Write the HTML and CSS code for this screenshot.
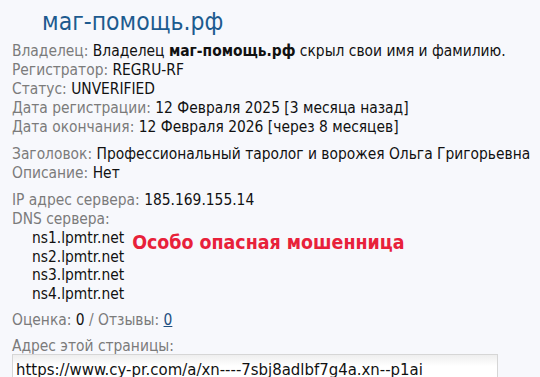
FILE: index.html
```html
<!DOCTYPE html>
<html lang="ru">
<head>
  <meta charset="UTF-8" />
  <meta name="viewport" content="width=device-width, initial-scale=1" />
  <title>маг-помощь.рф - whois</title>
  <link rel="stylesheet" href="styles.css">
</head>
<body>
  <h1 class="domain">маг-помощь.рф</h1>

  <div class="group">
    <p><span class="label">Владелец:</span> Владелец <b>маг-помощь.рф</b> скрыл свои имя и фамилию.</p>
    <p><span class="label">Регистратор:</span> REGRU-RF</p>
    <p><span class="label">Статус:</span> UNVERIFIED</p>
    <p><span class="label">Дата регистрации:</span> 12 Февраля 2025 [3 месяца назад]</p>
    <p><span class="label">Дата окончания:</span> 12 Февраля 2026 [через 8 месяцев]</p>
  </div>

  <div class="group">
    <p><span class="label">Заголовок:</span> Профессиональный таролог и ворожея Ольга Григорьевна</p>
    <p><span class="label">Описание:</span> Нет</p>
  </div>

  <div class="group">
    <p><span class="label">IP адрес сервера:</span> 185.169.155.14</p>
    <p><span class="label">DNS сервера:</span></p>
    <div class="dns">
      <ul class="dns-list">
        <li>ns1.lpmtr.net</li>
        <li>ns2.lpmtr.net</li>
        <li>ns3.lpmtr.net</li>
        <li>ns4.lpmtr.net</li>
      </ul>
      <div class="warning">Особо опасная мошенница</div>
    </div>
  </div>

  <div class="group">
    <p><span class="label">Оценка:</span> 0 <span class="label">/ Отзывы:</span> <a href="#">0</a></p>
  </div>

  <div class="group">
    <p class="url-label"><span class="label">Адрес этой страницы:</span></p>
    <input class="page-url" type="text" value="https://www.cy-pr.com/a/xn----7sbj8adlbf7g4a.xn--p1ai" readonly />
  </div>
</body>
</html>
```

FILE: styles.css
```css
body {
  margin: 0;
  padding: 8px 0 8px 12px;
  background-color: #f7f8fc;
  color: #111;
  font-family: 'DejaVu Sans Condensed', 'DejaVu Sans', sans-serif;
  font-size: 15.4px;
  line-height: 19px;
}
.domain {
  margin: 0 0 6px 30px;
  font-size: 24.5px;
  font-weight: normal;
  line-height: 28px;
  color: #1d5b8f;
}
.group {
  margin-bottom: 8px;
}
.group p {
  margin: 0;
  white-space: nowrap;
}
.group .url-label {
  line-height: 16px;
}
.label {
  color: #7b7b7b;
}
.dns {
  display: flex;
  align-items: flex-start;
}
.dns-list {
  list-style: none;
  margin: 0;
  padding: 0 0 0 20px;
}
.dns-list li {
  line-height: 18.5px;
}
.warning {
  margin: 4px 0 0 8px;
  color: #e8213a;
  font-size: 19.4px;
  font-weight: bold;
}
a {
  color: #1d4f80;
}
.page-url {
  box-sizing: border-box;
  width: 486px;
  height: 30px;
  margin-top: 0;
  padding: 3px 3px;
  border: 1px solid #d6d6d6;
  background: linear-gradient(#eeeeee, #ffffff 40%);
  font-family: inherit;
  font-size: 16.6px;
  color: #111;
}
```
